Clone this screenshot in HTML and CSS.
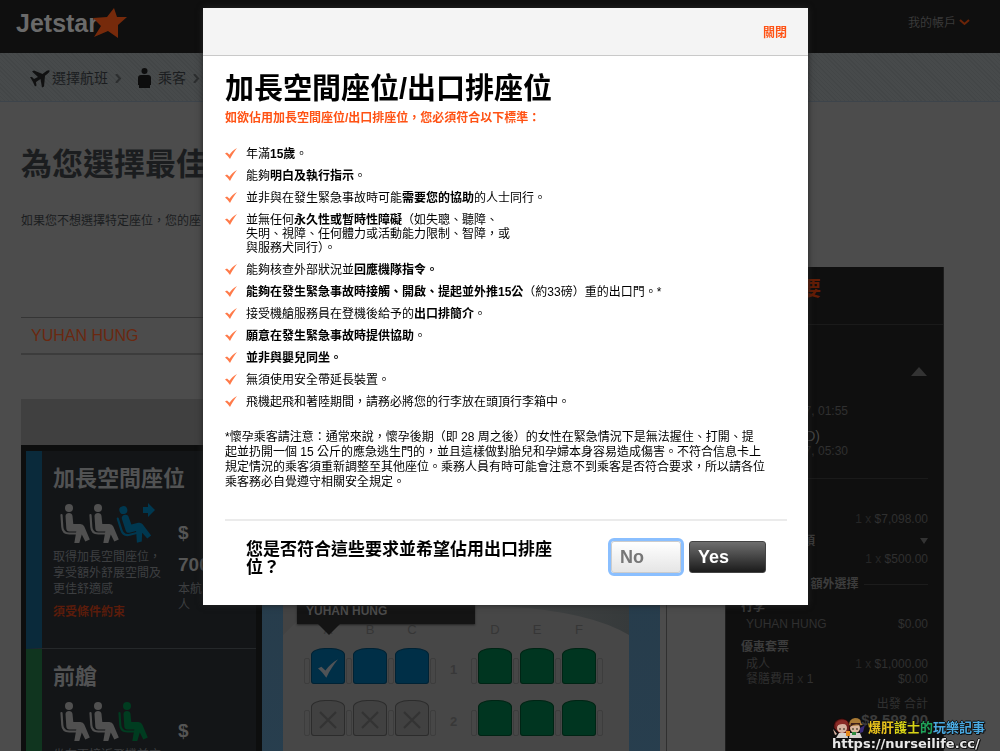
FILE: index.html
```html
<!DOCTYPE html>
<html lang="zh-Hant">
<head>
<meta charset="utf-8">
<title>Jetstar</title>
<link rel="stylesheet" href="styles.css">
</head>
<body>
<svg class="defs" aria-hidden="true">
  <symbol id="sitter" viewBox="0 0 31 40">
    <circle cx="9" cy="4" r="4" fill="currentColor"/>
    <path d="M1.500 11l.8 12c.3 5 3 6.500 7 6.500h9" fill="none" stroke="currentColor" stroke-width="2.200" stroke-linecap="round"/>
    <path d="M5.500 12c0-4 7-4 7 0l.8 8h7q3 0 4 2.500l5.500 13-4.500 2-3.500-7-2.500 8.500h-5l2-11.500H9.500c-2 0-3-1-3.200-3z" fill="currentColor"/>
  </symbol>
  <symbol id="tick" viewBox="0 0 12 11">
    <path d="M0 5.500l2-1 2.500 2.200C6.500 4 8.500 2 12 0 9.500 3 7 7 5 11 3.500 9 2 7 0 5.500z" fill="currentColor"/>
  </symbol>
  <symbol id="cross" viewBox="0 0 18 18">
    <path d="M1 1l16 16M17 1L1 17" stroke="currentColor" stroke-width="2" fill="none"/>
  </symbol>
</svg>

<header class="topbar">
  <a class="logo" href="#"><span>Jetstar</span><svg width="34" height="30" viewBox="0 0 34 30" aria-hidden="true"><polygon points="21,0 24,9 34,9 25,17 25,30 15,23 1,29 8,18 0,10 14,9" fill="#762a0b"/></svg></a>
  <a class="account" href="#">我的帳戶 <svg width="11" height="7" viewBox="0 0 11 7" aria-hidden="true"><path d="M1 1l4.500 4L10 1" fill="none" stroke="#6b2408" stroke-width="2"/></svg></a>
</header>

<nav class="steps">
  <a class="step" href="#"><svg width="20" height="19" viewBox="0 0 20 19" aria-hidden="true"><path d="M0 8l2 .1 2 2 4-2L2 2.500 4 1.500l8.500 3.500 4-3c2-1.200 3.500-.7 3 .6-.4 1-1.300 1.800-4.500 4.200L14 17.500l-2 1-1.500-8.500-4.500 3 .5 3.500-1.500 1-2-4.500z" fill="#111"/></svg>選擇航班</a>
  <svg class="sep" width="7" height="9" viewBox="0 0 7 9" aria-hidden="true"><path d="M1 0l4 4.500L1 9" fill="none" stroke="#2c2e2f" stroke-width="2"/></svg>
  <a class="step" href="#"><svg class="person" width="13" height="20" viewBox="0 0 13 20" aria-hidden="true"><circle cx="6.500" cy="3" r="3" fill="#0d0d0d"/><path d="M3 7h7q3 0 3 3v7h-1v3H1v-3H0v-7q0-3 3-3z" fill="#0d0d0d"/></svg>乘客</a>
  <svg class="sep" width="7" height="9" viewBox="0 0 7 9" aria-hidden="true"><path d="M1 0l4 4.500L1 9" fill="none" stroke="#2c2e2f" stroke-width="2"/></svg>
</nav>

<main class="page">
  <h1>為您選擇最佳座位</h1>
  <p class="intro">如果您不想選擇特定座位，您的座</p>

  <div class="columns">
    <section class="seating">
      <div class="passenger">YUHAN HUNG</div>
      <div class="card">
        <div class="card-head"></div>
        <div class="card-body">
          <div class="zones">
            <article class="zone zone-blue">
              <h2>加長空間座位</h2>
              <div class="zone-info">
                <div class="zone-desc">
                  <div class="figures"><svg><use href="#sitter"/></svg><svg><use href="#sitter"/></svg><svg class="special reclined"><use href="#sitter"/></svg><svg class="forward" viewBox="0 0 12 14"><path d="M0 4h5V0l7 7-7 7v-4H0z" fill="currentColor"/></svg></div>
                  <p>取得加長空間座位，<br>享受額外舒展空間及<br>更佳舒適感</p>
                  <a class="terms" href="#">須受條件約束</a>
                </div>
                <div class="zone-price"><b>$</b><b>700</b><span>本航<br>人</span></div>
              </div>
            </article>
            <article class="zone zone-green">
              <h2>前艙</h2>
              <div class="zone-info">
                <div class="zone-desc">
                  <div class="figures"><svg><use href="#sitter"/></svg><svg><use href="#sitter"/></svg><svg class="special"><use href="#sitter"/></svg></div>
                  <p>坐在更接近飛機前方</p>
                </div>
                <div class="zone-price"><b>$</b></div>
              </div>
            </article>
          </div>
          <div class="map">
            <div class="cabin">
              <svg class="hull" viewBox="0 0 346 40" preserveAspectRatio="none" aria-hidden="true"><defs><linearGradient id="shade" x1="0" x2="1"><stop offset="0" stop-color="#454646"/><stop offset="1" stop-color="#363a3b"/></linearGradient></defs><path d="M190 0Q300 2 346 30V0z" fill="url(#shade)"/><path d="M0 0h14v16L0 30z" fill="#434343"/></svg>
              <div class="line letters"><div class="trio"><span>A</span><span>B</span><span>C</span></div><span class="num"></span><div class="trio"><span>D</span><span>E</span><span>F</span></div></div>
              <div class="line">
                <div class="bank"><i></i><button class="seat blue" aria-label="1A"><svg width="20" height="19"><use href="#tick"/></svg></button><i></i><button class="seat blue" aria-label="1B"></button><i></i><button class="seat blue" aria-label="1C"></button><i></i></div>
                <span class="num">1</span>
                <div class="bank"><i></i><button class="seat green" aria-label="1D"></button><i></i><button class="seat green" aria-label="1E"></button><i></i><button class="seat green" aria-label="1F"></button><i></i></div>
              </div>
              <div class="line">
                <div class="bank"><i></i><button class="seat taken" aria-label="2A"><svg width="18" height="18"><use href="#cross"/></svg></button><i></i><button class="seat taken" aria-label="2B"><svg width="18" height="18"><use href="#cross"/></svg></button><i></i><button class="seat taken" aria-label="2C"><svg width="18" height="18"><use href="#cross"/></svg></button><i></i></div>
                <span class="num">2</span>
                <div class="bank"><i></i><button class="seat green" aria-label="2D"></button><i></i><button class="seat green" aria-label="2E"></button><i></i><button class="seat green" aria-label="2F"></button><i></i></div>
              </div>
              <div class="tip">YUHAN HUNG</div>
            </div>
          </div>
        </div>
      </div>
    </section>

    <aside class="summary">
      <h2>預訂摘要</h2>
      <div class="summary-body">
        <div class="fold"><svg width="16" height="9" viewBox="0 0 16 9" aria-hidden="true"><path d="M8 0l8 9H0z" fill="#333"/></svg></div>
        <div class="when first">2017, 01:55</div>
        <div class="where">(D)</div>
        <div class="when">2017, 05:30</div>
        <hr>
        <div class="row fare"><span></span><span><small>1 x</small> $7,098.00</span></div>
        <div class="row tax"><b>稅務及款項</b><svg width="8" height="6" viewBox="0 0 8 6" aria-hidden="true"><path d="M0 0h8L4 6z" fill="#333"/></svg></div>
        <div class="row tight"><span></span><span><small>1 x</small> $500.00</span></div>
        <div class="extras"><b>額外選擇</b></div>
        <div class="row group"><b>行李</b></div>
        <div class="row item"><span>YUHAN HUNG</span><span>$0.00</span></div>
        <div class="row group"><b>優惠套票</b></div>
        <div class="row item"><span>成人</span><span><small>1 x</small> $1,000.00</span></div>
        <div class="row item"><span>餐膳費用 <small>x</small> 1</span><span>$0.00</span></div>
        <div class="total"><span>出發 合計</span><b>$8,598.00</b></div>
      </div>
    </aside>
  </div>
</main>

<div class="overlay">
  <section class="dialog" role="dialog" aria-labelledby="dialog-title">
    <div class="dialog-head"><button class="close">關閉</button></div>
    <div class="dialog-body">
      <h2 id="dialog-title">加長空間座位/出口排座位</h2>
      <p class="lead">如欲佔用加長空間座位/出口排座位，您必須符合以下標準：</p>
      <ul class="rules">
        <li><svg><use href="#tick"/></svg><span>年滿<b>15歲</b>。</span></li>
        <li><svg><use href="#tick"/></svg><span>能夠<b>明白及執行指示</b>。</span></li>
        <li><svg><use href="#tick"/></svg><span>並非與在發生緊急事故時可能<b>需要您的協助</b>的人士同行。</span></li>
        <li><svg><use href="#tick"/></svg><span>並無任何<b>永久性或暫時性障礙</b>（如失聰、聽障、<br>失明、視障、任何體力或活動能力限制、智障，或<br>與服務犬同行）。</span></li>
        <li><svg><use href="#tick"/></svg><span>能夠核查外部狀況並<b>回應機隊指令。</b></span></li>
        <li><svg><use href="#tick"/></svg><span><b>能夠在發生緊急事故時接觸、開啟、提起並外推15公</b>（約33磅）重的出口門。*</span></li>
        <li><svg><use href="#tick"/></svg><span>接受機艙服務員在登機後給予的<b>出口排簡介</b>。</span></li>
        <li><svg><use href="#tick"/></svg><span><b>願意在發生緊急事故時提供協助</b>。</span></li>
        <li><svg><use href="#tick"/></svg><span><b>並非與嬰兒同坐。</b></span></li>
        <li><svg><use href="#tick"/></svg><span>無須使用安全帶延長裝置。</span></li>
        <li><svg><use href="#tick"/></svg><span>飛機起飛和著陸期間，請務必將您的行李放在頭頂行李箱中。</span></li>
      </ul>
      <p class="note">*懷孕乘客請注意：通常來說，懷孕後期（即 28 周之後）的女性在緊急情況下是無法握住、打開、提<br>起並扔開一個 15 公斤的應急逃生門的，並且這樣做對胎兒和孕婦本身容易造成傷害。不符合信息卡上<br>規定情況的乘客須重新調整至其他座位。乘務人員有時可能會注意不到乘客是否符合要求，所以請各位<br>乘客務必自覺遵守相關安全規定。</p>
      <div class="confirm">
        <p>您是否符合這些要求並希望佔用出口排座位？</p>
        <button class="btn no">No</button>
        <button class="btn yes">Yes</button>
      </div>
    </div>
  </section>
</div>

<div class="watermark">
  <div class="wm-top">
    <svg width="34" height="20" viewBox="0 0 34 20" aria-hidden="true">
      <path d="M2 10C1 2 9-1 14 2c4 2 5 8 2 13l-8 1z" fill="#6e1f1c" stroke="#200" stroke-width=".6"/>
      <circle cx="10" cy="10" r="5" fill="#d9b3a2"/><path d="M4 9q4-5 12-2l-1-4q-7-3-11 2z" fill="#8a2b27"/>
      <path d="M7 15h8l1 5H4z" fill="#d5d0cc"/><path d="M1 11l4 5-2 1z" fill="#e0b9a8"/>
      <circle cx="23" cy="10" r="5" fill="#dcb89f"/><path d="M17 7q0-6 6-7 6 0 6 5l2 2-12 1z" fill="#a97a35"/><path d="M18 9q4-4 10-2v-2l-9 0z" fill="#3d1d18"/>
      <path d="M18 15h10l2 5H17z" fill="#d5d0cc"/><path d="M14 13h4v5h-4z" fill="#e58a1d"/><path d="M20 14h4v3h-4z" fill="#2d8a3d"/><path d="M28 10l5-3-2 7-3 1z" fill="#3b2d78"/>
      <path d="M8 10v2M12 10v2M21 10v2M25 10v2" stroke="#221" stroke-width="1"/>
    </svg>
    <b><span class="c1">爆肝</span><span class="c2">護士</span><span class="c3">的</span><span class="c4">玩樂記事</span></b>
  </div>
  <div class="wm-url">https://nurseilife.cc/</div>
</div>
</body>
</html>
```
FILE: styles.css
```css
* { box-sizing: border-box; }
html, body { height: 100%; }
body {
  margin: 0;
  overflow: hidden;
  background: #4c4c4c;
  color: #1b1d1f;
  font: 12px/16px "Liberation Sans", "Noto Sans CJK TC", sans-serif;
}
h1, h2, p, ul { margin: 0; padding: 0; }
a { color: inherit; text-decoration: none; }
button { font-family: inherit; padding: 0; border: 0; cursor: pointer; }
svg { display: block; flex: none; }
.defs { position: absolute; width: 0; height: 0; }

.topbar {
  display: flex;
  justify-content: space-between;
  align-items: center;
  height: 53px;
  padding: 0 30px 8px 16px;
  background: #0f0f0f;
}
.logo { display: flex; align-items: center; color: #6a6a6a; font-size: 25px; font-weight: bold; line-height: 30px; }
.logo svg { margin-left: -5px; }
.account { display: flex; align-items: center; gap: 3px; color: #3a3a3a; }

.steps {
  display: flex;
  align-items: center;
  height: 49px;
  padding: 2px 30px 0;
  border-bottom: 1px solid #3d444b;
  background: repeating-linear-gradient(45deg, #434647 0 1px, #474a4b 1px 3px);
  font-size: 14px;
}
.step { display: flex; align-items: center; gap: 2px; }
.person { margin-right: 5px; }
.sep { margin: 0 16px 0 7px; }

.page { padding: 45px 56px 0 21px; }
.page h1 { font-size: 31px; line-height: 36px; }
.intro { margin-top: 30px; }
.columns {
  display: grid;
  grid-template-columns: minmax(0, 1fr) 219px;
  gap: 58px;
  margin-top: 38px;
}

.seating { padding-top: 50px; }
.passenger {
  padding: 0 10px;
  border-top: 1px solid #353535;
  border-bottom: 2px solid #3c3c3c;
  color: #6a2810;
  font-size: 16px;
  line-height: 35px;
}
.card { margin-top: 44px; border-right: 1px solid #303030; }
.card-head { height: 46px; background: #404040; }
.card-body { display: grid; grid-template-columns: 241px minmax(0, 1fr); }
.zones { padding: 6px 6px 0 5px; background: #0d0e0e; }
.zone { min-height: 198px; padding: 16px 0 0 11px; border-left: 16px solid; border-bottom: 1px solid #25282a; background: #131517; color: #3d3f41; }
.zone-blue { border-left-color: #0a2a3b; }
.zone-green { border-left-color: #10351f; }
.zone h2 { color: #515253; font-size: 22px; line-height: 24px; }
.zone-info { display: grid; grid-template-columns: 125px minmax(0, 1fr); }
.figures { display: flex; height: 40px; margin: 13px 0 5px 7px; color: #505050; }
.figures svg { width: 31px; height: 40px; margin-right: -2px; }
.zone-blue .special, .figures .forward { color: #003850; }
.zone-green .special { color: #003c20; }
.figures .reclined { transform: rotate(-14deg); }
.figures .forward { width: 12px; height: 14px; margin: -1px 0 0 -4px; }
.terms { display: block; margin-top: 7px; color: #5a1c0b; font-weight: bold; }
.zone-price { padding-top: 26px; }
.zone-price b { display: block; color: #555; font-size: 19px; line-height: 32px; }
.zone-price span { display: block; }

.map { padding: 0 31px 0 21px; margin-right: 6px; background: linear-gradient(#263b4a, #283f4f); }
.cabin { position: relative; height: 330px; padding: 177px 0 0 21px; background: #474747; }
.hull { position: absolute; top: 160px; left: 0; width: 100%; height: 40px; }
.line { position: relative; display: flex; margin-bottom: 16px; }
.letters { margin-bottom: 10px; color: #363636; font-size: 13px; }
.trio { display: grid; grid-template-columns: repeat(3, 42px); width: 132px; padding-left: 3px; text-align: center; }
.num { width: 35px; align-self: center; padding-top: 8px; color: #383838; font-size: 13px; font-weight: bold; text-align: center; }
.letters .num { padding: 0; }
.bank { display: flex; align-items: flex-end; gap: 1px; height: 36px; }
.bank i { width: 6px; height: 26px; border: 1px solid #3d3d3d; border-radius: 2px; }
.seat { display: grid; place-items: center; width: 34px; height: 36px; border: 1px solid; border-radius: 14px 14px 3px 3px / 7px 7px 3px 3px; }
.seat svg { margin-top: 4px; }
.blue { background: #002f47; border-color: #002234; color: #505356; }
.green { background: #003520; border-color: #002414; }
.taken { background: #414141; border-color: #2c2c2c; color: #333; }
.tip {
  position: absolute;
  top: 150px;
  left: 14px;
  width: 178px;
  height: 29px;
  padding: 8px 9px 0;
  background: #141414;
  color: #4b4b4b;
  font-weight: bold;
  box-shadow: 0 1px 2px #222;
}
.tip::after {
  content: "";
  position: absolute;
  top: 29px;
  left: 21px;
  border: 11px solid transparent;
  border-top-color: #141414;
  border-bottom: 0;
}

.summary { border: 1px solid #1d1d1d; border-top: 0; border-bottom: 0; background: #0f0f0f; color: #303030; }
.summary h2 { height: 58px; padding-left: 15px; border-bottom: 1px solid #1a1a1a; color: #641d05; font-size: 20px; line-height: 44px; }
.summary-body { padding: 0 15px 40px; }
.fold { display: flex; justify-content: flex-end; padding: 42px 1px 0 0; }
.when, .where { width: 107px; text-align: right; line-height: 15px; }
.when.first { margin-top: 28px; }
.where { margin-top: 10px; padding-right: 28px; color: #444; font-size: 14px; }
.summary hr { margin: 19px 0 32px; border: 0; border-top: 1px solid #1a1a1a; }
.row { display: flex; justify-content: space-between; align-items: center; }
.row small { color: #262626; font-size: 12px; }
.summary b { color: #3c3c3c; }
.tax { margin-top: 6px; }
.tax b { width: 74px; text-align: right; white-space: nowrap; }
.tight { margin-top: 2px; }
.extras { display: flex; align-items: center; gap: 5px; margin: 9px 0 7px; }
.extras::before, .extras::after { content: ""; height: 1px; flex: 1; background: #1c1c1c; }
.item { padding-left: 5px; line-height: 15px; }
.group { margin-top: 7px; margin-bottom: 2px; }
.total { margin-top: 9px; text-align: right; }
.total span, .total b { display: block; }
.total b { font-size: 15px; }

.overlay { position: fixed; inset: 0; display: flex; justify-content: center; align-items: flex-start; padding: 8px 0 0 11px; }
.dialog { width: 605px; background: #fff; color: #000; box-shadow: 0 0 6px #222; }
.dialog-head { display: flex; justify-content: flex-end; align-items: center; height: 48px; padding: 0 21px; border-bottom: 1px solid #c9c9c9; background: #f4f4f4; }
.close { background: none; color: #ff5214; font-size: 12px; font-weight: bold; }
.dialog-body { padding: 15px 21px 28px 22px; white-space: nowrap; }
.dialog h2 { font-size: 29px; line-height: 36px; }
.lead { margin-top: 3px; color: #ff5214; font-weight: bold; }
.rules { display: grid; gap: 8px; margin-top: 21px; list-style: none; line-height: 14px; }
.rules li { display: flex; gap: 9px; }
.rules svg { width: 12px; height: 11px; margin-top: 1px; color: #ff7a49; }
.note { margin-top: 21px; line-height: 15px; }
.confirm { display: flex; align-items: flex-start; gap: 8px; margin-top: 29px; padding: 20px 21px 0; border-top: 2px solid #ebebeb; }
.confirm p { width: 308px; margin-right: auto; white-space: normal; font-size: 17px; font-weight: bold; line-height: 18px; }
.btn { height: 32px; padding-left: 8px; border-radius: 3px; font-size: 18px; font-weight: bold; text-align: left; }
.no { width: 70px; border: 1px solid #ccc; background: linear-gradient(#fff, #e5e5e5); color: #777; outline: 3px solid #8abfff; }
.yes { width: 77px; border: 1px solid #444; background: linear-gradient(#6e6e6e, #1b1b1b); color: #fff; }
.confirm .btn { flex: none; }

.watermark { position: fixed; right: 15px; bottom: 0; color: #e8e8e8; text-shadow: 1px 0 #111, -1px 0 #111, 0 1px #111, 0 -1px #111, 1px 1px #111; }
.wm-top { display: flex; align-items: center; gap: 2px; height: 18px; font-size: 13px; }
.wm-url { font: bold 13px/14px "DejaVu Sans", sans-serif; }
.c1 { color: #e8c21c; }
.c2 { color: #d6d216; }
.c3 { color: #1fa45a; }
.c4 { color: #4aa8e0; }
```
